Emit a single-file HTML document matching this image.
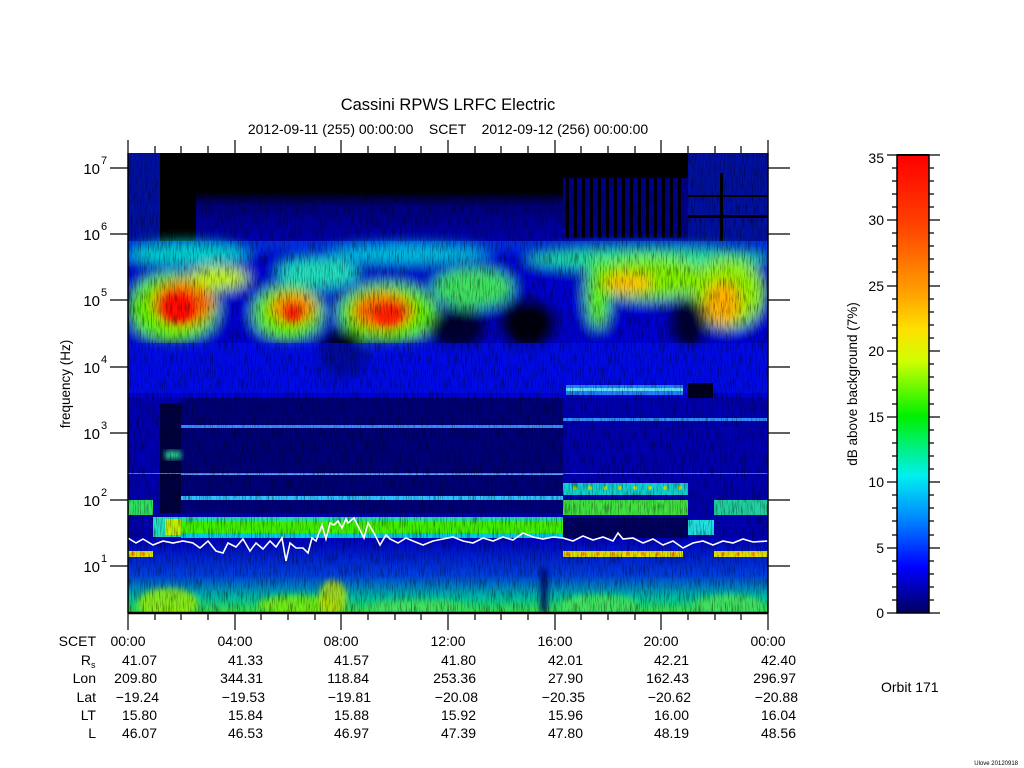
<!DOCTYPE html>
<html><head><meta charset="utf-8"><style>
html,body{margin:0;padding:0;background:#fff;}
svg{display:block;font-family:"Liberation Sans",sans-serif;}
</style></head><body>
<svg width="1024" height="768" viewBox="0 0 1024 768" xmlns="http://www.w3.org/2000/svg">
<defs>
<filter id="b3" x="-20%" y="-20%" width="140%" height="140%"><feGaussianBlur stdDeviation="3"/></filter>
<filter id="b6" x="-30%" y="-30%" width="160%" height="160%"><feGaussianBlur stdDeviation="6"/></filter>
<filter id="spk" x="0" y="0" width="100%" height="100%">
<feTurbulence type="fractalNoise" baseFrequency="0.9 0.08" numOctaves="2" seed="3"/>
<feColorMatrix values="0 0 0 0 0  0 0 0 0 0  0 0 0 0 0  0 0 0 -3 1.6"/>
</filter>
<linearGradient id="cb" x1="0" y1="0" x2="0" y2="1">
<stop offset="0" stop-color="#ff0000"/><stop offset="0.15" stop-color="#ff4000"/>
<stop offset="0.3" stop-color="#ffa000"/><stop offset="0.38" stop-color="#ffe000"/>
<stop offset="0.45" stop-color="#d0ff00"/><stop offset="0.57" stop-color="#00f000"/>
<stop offset="0.7" stop-color="#00f0f0"/><stop offset="0.8" stop-color="#0080ff"/>
<stop offset="0.9" stop-color="#0000ff"/><stop offset="1" stop-color="#000060"/>
</linearGradient>
<linearGradient id="top" x1="0" y1="0" x2="0" y2="1">
<stop offset="0" stop-color="#000"/><stop offset="0.45" stop-color="#000010"/>
<stop offset="0.6" stop-color="#00007a"/><stop offset="1" stop-color="#0000b0"/>
</linearGradient>
<linearGradient id="bot" x1="0" y1="0" x2="0" y2="1">
<stop offset="0" stop-color="#0000c0"/><stop offset="0.5" stop-color="#0040e0"/>
<stop offset="0.8" stop-color="#00c0a0"/><stop offset="1" stop-color="#40e040"/>
</linearGradient>
<clipPath id="pc"><rect x="0" y="0" width="640" height="460"/></clipPath>
</defs>

<g transform="translate(128,153)" clip-path="url(#pc)">
<rect x="0" y="0" width="640" height="460" fill="#0000d8"/>
<rect x="0" y="0" width="640" height="88" fill="url(#top)"/>
<rect x="0" y="0" width="32" height="100" fill="#0010a0"/>
<rect x="32" y="0" width="36" height="90" fill="#000"/>
<rect x="68" y="0" width="367" height="40" fill="#000"/>
<g fill="#000">
<rect x="435" y="0" width="125" height="85" fill="#00008a"/>
<rect x="438" y="0" width="3" height="85"/><rect x="446" y="0" width="3" height="85"/><rect x="454" y="0" width="3" height="85"/><rect x="462" y="0" width="3" height="85"/><rect x="470" y="0" width="3" height="85"/><rect x="478" y="0" width="3" height="85"/><rect x="486" y="0" width="3" height="85"/><rect x="494" y="0" width="3" height="85"/><rect x="502" y="0" width="3" height="85"/><rect x="510" y="0" width="3" height="85"/><rect x="518" y="0" width="3" height="85"/><rect x="526" y="0" width="3" height="85"/><rect x="534" y="0" width="3" height="85"/><rect x="542" y="0" width="3" height="85"/><rect x="550" y="0" width="3" height="85"/>
<rect x="435" y="0" width="125" height="25"/>
<rect x="560" y="0" width="80" height="88" fill="#0010a0"/>
<rect x="560" y="42" width="80" height="2"/><rect x="560" y="62" width="80" height="3"/>
<rect x="592" y="20" width="3" height="68"/>
</g>
<rect x="0" y="88" width="640" height="25" fill="#0030e0"/>
<g filter="url(#b6)">
<rect x="0" y="100" width="640" height="90" fill="#0000d0"/>
<ellipse cx="60" cy="100" rx="60" ry="12" fill="#00d0d0"/>
<ellipse cx="280" cy="100" rx="80" ry="10" fill="#00c0e0"/>
<ellipse cx="520" cy="105" rx="120" ry="12" fill="#20e0a0"/>
<ellipse cx="45" cy="155" rx="45" ry="35" fill="#60f000"/>
<ellipse cx="160" cy="160" rx="35" ry="28" fill="#60f000"/>
<ellipse cx="260" cy="160" rx="50" ry="30" fill="#60f000"/>
<ellipse cx="345" cy="135" rx="40" ry="20" fill="#40e060"/>
<ellipse cx="190" cy="120" rx="40" ry="15" fill="#20e0c0"/>
<ellipse cx="520" cy="125" rx="60" ry="22" fill="#80f000"/>
<ellipse cx="600" cy="140" rx="38" ry="35" fill="#90f000"/>
<ellipse cx="470" cy="140" rx="12" ry="35" fill="#60f000"/>
<ellipse cx="55" cy="150" rx="30" ry="22" fill="#ff6000"/>
<ellipse cx="165" cy="155" rx="22" ry="15" fill="#ff8000"/>
<ellipse cx="255" cy="158" rx="30" ry="18" fill="#ff6000"/>
<ellipse cx="595" cy="150" rx="18" ry="22" fill="#ffb000"/>
<ellipse cx="500" cy="130" rx="25" ry="10" fill="#ffc000"/>
<ellipse cx="90" cy="125" rx="30" ry="12" fill="#c0f000"/>
<ellipse cx="400" cy="170" rx="30" ry="25" fill="#000010"/>
<ellipse cx="215" cy="200" rx="25" ry="25" fill="#000020"/>
<ellipse cx="330" cy="175" rx="30" ry="20" fill="#000030"/>
<ellipse cx="560" cy="170" rx="20" ry="25" fill="#000030"/>
</g>
<g filter="url(#b3)">
<ellipse cx="50" cy="155" rx="16" ry="14" fill="#ff1000"/>
<ellipse cx="260" cy="162" rx="14" ry="10" fill="#ff2000"/>
<ellipse cx="165" cy="160" rx="8" ry="8" fill="#ff2000"/>
</g>
<rect x="0" y="190" width="640" height="50" fill="#0010f0" opacity="0.6"/>
<rect x="438" y="232" width="117" height="10" fill="#2080ff"/>
<rect x="438" y="235" width="117" height="3" fill="#60e0ff"/>
<rect x="560" y="230" width="25" height="30" fill="#000020"/>
<rect x="0" y="245" width="640" height="140" fill="#0000b0"/>
<rect x="53" y="245" width="382" height="115" fill="#000078"/>
<rect x="32" y="250" width="21" height="110" fill="#000040"/>
<g fill="#3090ff">
<rect x="53" y="272" width="382" height="3"/>
<rect x="53" y="320" width="382" height="2" fill="#60a0ff"/>
<rect x="53" y="343" width="382" height="4" fill="#30c0ff"/>
<rect x="435" y="265" width="205" height="3"/>
<rect x="0" y="320" width="640" height="1" fill="#4080ff"/>
</g>
<rect x="37" y="298" width="16" height="8" fill="#30e0a0" filter="url(#b3)"/>
<rect x="435" y="330" width="125" height="12" fill="#10d0d0"/>
<g fill="#c0e000"><circle cx="447" cy="335" r="2"/><circle cx="462" cy="335" r="2"/><circle cx="477" cy="335" r="2"/><circle cx="492" cy="335" r="2"/><circle cx="507" cy="335" r="2"/><circle cx="522" cy="335" r="2"/><circle cx="537" cy="335" r="2"/><circle cx="552" cy="335" r="2"/></g>
<rect x="0" y="347" width="25" height="15" fill="#30e060"/>
<rect x="435" y="347" width="125" height="15" fill="#40e040"/>
<rect x="586" y="347" width="54" height="15" fill="#20d0a0"/>
<rect x="25" y="364" width="28" height="20" fill="#20e0c0"/>
<rect x="37" y="366" width="16" height="16" fill="#c0f000"/>
<rect x="53" y="364" width="382" height="20" fill="#40f000"/>
<rect x="53" y="364" width="382" height="4" fill="#20e0a0"/>
<rect x="53" y="380" width="382" height="5" fill="#00d0e0"/>
<rect x="560" y="367" width="26" height="15" fill="#20e0e0"/>
<rect x="435" y="365" width="125" height="20" fill="#000060"/>
<rect x="0" y="385" width="640" height="75" fill="url(#bot)"/>
<g fill="#e0e000">
<rect x="0" y="398" width="25" height="6"/>
<rect x="435" y="398" width="120" height="6"/>
<rect x="586" y="398" width="54" height="6"/>
</g>
<g fill="#ff9000">
<circle cx="5" cy="401" r="2"/><circle cx="15" cy="401" r="2"/>
<circle cx="440" cy="401" r="2"/><circle cx="455" cy="401" r="2"/><circle cx="470" cy="401" r="2"/><circle cx="485" cy="401" r="2"/><circle cx="500" cy="401" r="2"/><circle cx="515" cy="401" r="2"/><circle cx="530" cy="401" r="2"/><circle cx="545" cy="401" r="2"/>
<circle cx="595" cy="401" r="2"/><circle cx="610" cy="401" r="2"/><circle cx="625" cy="401" r="2"/>
</g>
<g filter="url(#b3)">
<ellipse cx="40" cy="450" rx="30" ry="15" fill="#a0f000" opacity="0.8"/>
<ellipse cx="170" cy="452" rx="40" ry="10" fill="#80f000" opacity="0.8"/>
<ellipse cx="205" cy="445" rx="14" ry="18" fill="#c0e000" opacity="0.8"/>
<ellipse cx="290" cy="455" rx="50" ry="8" fill="#40e060"/>
<ellipse cx="470" cy="452" rx="40" ry="10" fill="#40e060"/>
<ellipse cx="600" cy="452" rx="35" ry="10" fill="#40e060"/>
<rect x="413" y="415" width="6" height="45" fill="#000060"/>
</g>
<rect x="0" y="0" width="640" height="460" filter="url(#spk)" opacity="0.45"/>
<polyline fill="none" stroke="#fff" stroke-width="1.6" points="0,385 8,390 15,386 25,392 35,388 45,390 55,388 65,390 72,395 80,388 88,398 95,400 100,390 108,394 115,386 122,398 128,390 135,396 142,388 148,394 154,385 158,408 162,390 168,395 175,395 180,400 184,385 188,388 194,372 198,386 202,370 206,372 210,368 214,375 218,366 220,370 226,365 232,377 236,385 240,370 246,380 252,392 258,382 262,386 270,390 278,385 285,388 295,392 305,388 315,386 325,384 335,388 345,390 355,385 365,388 375,384 385,387 395,380 405,384 415,386 425,384 435,385 445,388 455,383 465,387 475,384 485,388 490,380 495,386 505,385 515,390 525,386 535,392 545,388 555,395 565,390 575,388 585,392 595,388 605,390 615,386 625,389 640,388"/>
</g>
<g stroke="#000" stroke-width="1.5" fill="none">
<line x1="128" y1="153" x2="128" y2="613"/>
<line x1="768" y1="153" x2="768" y2="613"/>
<line x1="128" y1="613" x2="768" y2="613" stroke-width="2.5"/>
</g>
<g stroke="#000" stroke-width="1.2">
<path d="M128 140V153M235 140V153M341 140V153M448 140V153M555 140V153M661 140V153M768 140V153
M155 146V153M181 146V153M208 146V153M261 146V153M288 146V153M315 146V153M368 146V153M395 146V153M421 146V153M475 146V153M501 146V153M528 146V153M581 146V153M608 146V153M635 146V153M688 146V153M715 146V153M741 146V153"/>
<path d="M128 613V630M235 613V630M341 613V630M448 613V630M555 613V630M661 613V630M768 613V630
M155 613V620M181 613V620M208 613V620M261 613V620M288 613V620M315 613V620M368 613V620M395 613V620M421 613V620M475 613V620M501 613V620M528 613V620M581 613V620M608 613V620M635 613V620M688 613V620M715 613V620M741 613V620"/>
<path d="M110 168H128M110 234H128M110 300H128M110 367H128M110 433H128M110 500H128M110 566H128
M768 168H790M768 234H790M768 300H790M768 367H790M768 433H790M768 500H790M768 566H790"/>
</g>
<g fill="#000">
<text x="448" y="110" text-anchor="middle" font-size="16.5">Cassini RPWS LRFC Electric</text>
<text x="448" y="134" text-anchor="middle" font-size="14" xml:space="preserve">2012-09-11 (255) 00:00:00    SCET    2012-09-12 (256) 00:00:00</text>
</g>
<g fill="#000" font-size="15" text-anchor="end">
<text x="100" y="174">10</text><text x="100" y="240">10</text><text x="100" y="306">10</text><text x="100" y="373">10</text><text x="100" y="439">10</text><text x="100" y="506">10</text><text x="100" y="572">10</text>
</g>
<g fill="#000" font-size="11">
<text x="101" y="164">7</text><text x="101" y="230">6</text><text x="101" y="296">5</text><text x="101" y="363">4</text><text x="101" y="429">3</text><text x="101" y="496">2</text><text x="101" y="562">1</text>
</g>
<text transform="translate(70,384) rotate(-90)" text-anchor="middle" font-size="13.5" fill="#000">frequency (Hz)</text>
<g fill="#000" font-size="14">
<g text-anchor="end">
<text x="96" y="646">SCET</text><text x="91" y="665">R</text><text x="96" y="683">Lon</text><text x="96" y="702">Lat</text><text x="96" y="720">LT</text><text x="96" y="738">L</text>
</g>
<text x="91" y="668" font-size="9">s</text>
<g text-anchor="middle">
<text x="128" y="646">00:00</text><text x="235" y="646">04:00</text><text x="341" y="646">08:00</text><text x="448" y="646">12:00</text><text x="555" y="646">16:00</text><text x="661" y="646">20:00</text><text x="768" y="646">00:00</text>
</g>
<g text-anchor="end">
<text x="157" y="665">41.07</text><text x="263" y="665">41.33</text><text x="369" y="665">41.57</text><text x="476" y="665">41.80</text><text x="583" y="665">42.01</text><text x="689" y="665">42.21</text><text x="796" y="665">42.40</text>
<text x="157" y="683">209.80</text><text x="263" y="683">344.31</text><text x="369" y="683">118.84</text><text x="476" y="683">253.36</text><text x="583" y="683">27.90</text><text x="689" y="683">162.43</text><text x="796" y="683">296.97</text>
<text x="159" y="702">−19.24</text><text x="265" y="702">−19.53</text><text x="371" y="702">−19.81</text><text x="478" y="702">−20.08</text><text x="585" y="702">−20.35</text><text x="691" y="702">−20.62</text><text x="798" y="702">−20.88</text>
<text x="157" y="720">15.80</text><text x="263" y="720">15.84</text><text x="369" y="720">15.88</text><text x="476" y="720">15.92</text><text x="583" y="720">15.96</text><text x="689" y="720">16.00</text><text x="796" y="720">16.04</text>
<text x="157" y="738">46.07</text><text x="263" y="738">46.53</text><text x="369" y="738">46.97</text><text x="476" y="738">47.39</text><text x="583" y="738">47.80</text><text x="689" y="738">48.19</text><text x="796" y="738">48.56</text>
</g>
<text x="881" y="692">Orbit 171</text>
</g>
<rect x="897" y="155" width="32" height="458" fill="url(#cb)" stroke="#000" stroke-width="1.5"/>
<line x1="897" y1="155" x2="929" y2="155" stroke="#000" stroke-width="2"/>
<g stroke="#000" stroke-width="1.2">
<path d="M887 155H897M887 220H897M887 286H897M887 351H897M887 417H897M887 482H897M887 548H897M887 613H897
M929 155H940M929 220H940M929 286H940M929 351H940M929 417H940M929 482H940M929 548H940M929 613H940
M892 168H897M892 181H897M892 194H897M892 207H897M892 233H897M892 246H897M892 259H897M892 272H897M892 299H897M892 312H897M892 325H897M892 338H897M892 364H897M892 377H897M892 390H897M892 404H897M892 430H897M892 443H897M892 456H897M892 469H897M892 495H897M892 508H897M892 521H897M892 535H897M892 561H897M892 574H897M892 587H897M892 600H897
M929 168H934M929 181H934M929 194H934M929 207H934M929 233H934M929 246H934M929 259H934M929 272H934M929 299H934M929 312H934M929 325H934M929 338H934M929 364H934M929 377H934M929 390H934M929 404H934M929 430H934M929 443H934M929 456H934M929 469H934M929 495H934M929 508H934M929 521H934M929 535H934M929 561H934M929 574H934M929 587H934M929 600H934"/>
</g>
<g fill="#000" font-size="14" text-anchor="end">
<text x="884" y="163">35</text><text x="884" y="225">30</text><text x="884" y="291">25</text><text x="884" y="356">20</text><text x="884" y="422">15</text><text x="884" y="487">10</text><text x="884" y="553">5</text><text x="884" y="618">0</text>
</g>
<text transform="translate(857,384) rotate(-90)" text-anchor="middle" font-size="13.5" fill="#000">dB above background (7%)</text>
<text x="1018" y="765" text-anchor="end" font-size="6" fill="#000">Ulove 20120918</text>
</svg>
</body></html>
